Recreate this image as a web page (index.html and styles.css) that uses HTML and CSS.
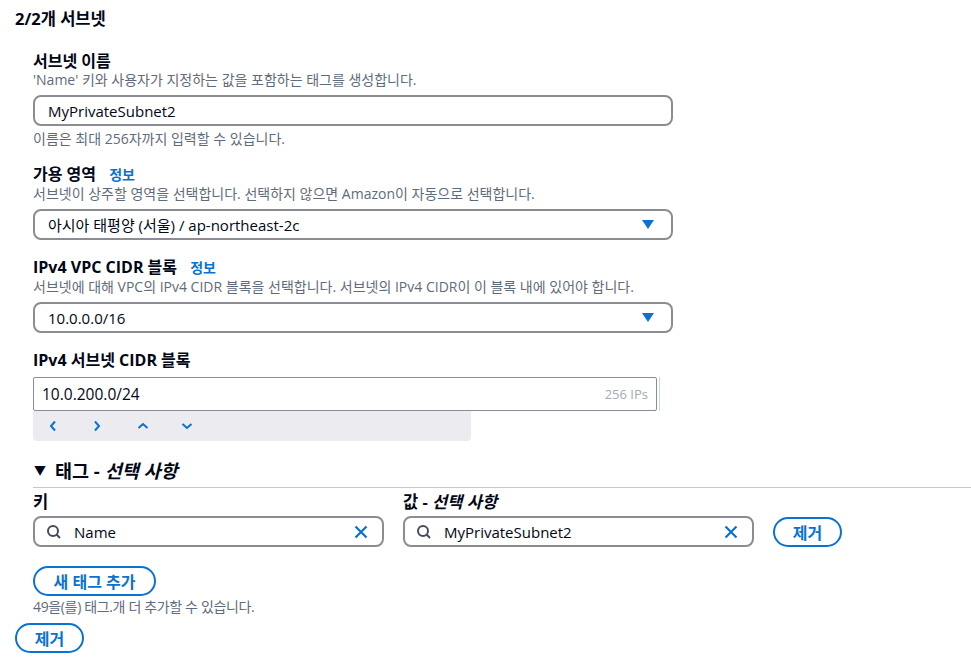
FILE: index.html
```html
<!DOCTYPE html>
<html lang="ko">
<head>
    <meta charset="UTF-8">
    <meta name="viewport" content="width=device-width, initial-scale=1.0">
    <title>서브넷 생성</title>
    <link rel="stylesheet" href="styles.css">
</head>
<body>

    <div class="subnet">
        <h2 class="subnet-title">2/2개 서브넷</h2>

        <div class="subnet-body">
            <div class="field field-first">
                <div class="label">서브넷 이름</div>
                <div class="desc">'Name' 키와 사용자가 지정하는 값을 포함하는 태그를 생성합니다.</div>
                <div class="input">MyPrivateSubnet2</div>
                <div class="hint">이름은 최대 256자까지 입력할 수 있습니다.</div>
            </div>

            <div class="field">
                <div class="label">가용 영역 <a class="info" href="#">정보</a></div>
                <div class="desc">서브넷이 상주할 영역을 선택합니다. 선택하지 않으면 Amazon이 자동으로 선택합니다.</div>
                <div class="input select">
                    <span>아시아 태평양 (서울) / ap-northeast-2c</span>
                    <svg class="caret" width="12" height="9" viewBox="0 0 12 9"><path d="M0 0h12L6 9z" fill="#0972d3"/></svg>
                </div>
            </div>

            <div class="field">
                <div class="label">IPv4 VPC CIDR 블록 <a class="info" href="#">정보</a></div>
                <div class="desc">서브넷에 대해 VPC의 IPv4 CIDR 블록을 선택합니다. 서브넷의 IPv4 CIDR이 이 블록 내에 있어야 합니다.</div>
                <div class="input select">
                    <span>10.0.0.0/16</span>
                    <svg class="caret" width="12" height="9" viewBox="0 0 12 9"><path d="M0 0h12L6 9z" fill="#0972d3"/></svg>
                </div>
            </div>

            <div class="field">
                <div class="label">IPv4 서브넷 CIDR 블록</div>
                <div class="cidr-row">
                    <div class="cidr-input">
                        <span>10.0.200.0/24</span>
                        <span class="ips">256 IPs</span>
                    </div>
                    <div class="cidr-edge"></div>
                </div>
                <div class="cidr-tools">
                    <svg width="8" height="12" viewBox="0 0 8 12"><path d="M6 1.5L2 6l4 4.5" fill="none" stroke="#0972d3" stroke-width="2"/></svg>
                    <svg width="8" height="12" viewBox="0 0 8 12"><path d="M2 1.5L6 6l-4 4.5" fill="none" stroke="#0972d3" stroke-width="2"/></svg>
                    <svg width="12" height="8" viewBox="0 0 12 8"><path d="M1.5 6L6 2l4.5 4" fill="none" stroke="#0972d3" stroke-width="2"/></svg>
                    <svg width="12" height="8" viewBox="0 0 12 8"><path d="M1.5 2L6 6l4.5-4" fill="none" stroke="#0972d3" stroke-width="2"/></svg>
                </div>
            </div>

            <div class="tags">
                <div class="tags-head">
                    <span class="tri">&#9660;</span>
                    <span>태그 - <i>선택 사항</i></span>
                </div>
                <div class="tags-line"></div>

                <div class="tag-grid">
                    <div class="tag-label">키</div>
                    <div class="tag-label">값 - <i>선택 사항</i></div>
                    <div></div>

                    <div class="input tag-input">
                        <svg class="search" width="16" height="16" viewBox="0 0 16 16"><circle cx="7" cy="7" r="5" fill="none" stroke="#414d5c" stroke-width="2"/><path d="M10.5 10.5L14 14" stroke="#414d5c" stroke-width="2"/></svg>
                        <span>Name</span>
                        <svg class="clear" width="14" height="14" viewBox="0 0 14 14"><path d="M1.5 1.5l11 11M12.5 1.5l-11 11" stroke="#0972d3" stroke-width="2.2"/></svg>
                    </div>
                    <div class="input tag-input">
                        <svg class="search" width="16" height="16" viewBox="0 0 16 16"><circle cx="7" cy="7" r="5" fill="none" stroke="#414d5c" stroke-width="2"/><path d="M10.5 10.5L14 14" stroke="#414d5c" stroke-width="2"/></svg>
                        <span>MyPrivateSubnet2</span>
                        <svg class="clear" width="14" height="14" viewBox="0 0 14 14"><path d="M1.5 1.5l11 11M12.5 1.5l-11 11" stroke="#0972d3" stroke-width="2.2"/></svg>
                    </div>
                    <button class="btn btn-row">제거</button>
                </div>

                <button class="btn btn-add">새 태그 추가</button>
                <div class="hint hint-tags">49을(를) 태그.개 더 추가할 수 있습니다.</div>
            </div>
        </div>

        <button class="btn btn-remove">제거</button>
    </div>

</body>
</html>
```

FILE: styles.css
```css
body {
    margin: 0;
    font-family: "Open Sans", "Noto Sans CJK KR", sans-serif;
    color: #000716;
    background: #fff;
}
.subnet {
    padding: 9px 0 0 15px;
}
.subnet-title {
    margin: 0;
    font-size: 16.5px;
    line-height: 20px;
    font-weight: 700;
}
.subnet-body {
    padding-left: 18px;
}
.field {
    margin-top: 17px;
    width: 640px;
}
.field-first {
    margin-top: 22px;
}
.label {
    font-size: 16px;
    line-height: 20px;
    font-weight: 700;
}
.info {
    margin-left: 9px;
    font-size: 14px;
    color: #0972d3;
    text-decoration: none;
}
.desc {
    margin-top: 1px;
    font-size: 14px;
    line-height: 16px;
    color: #5f6b7a;
}
.input {
    margin-top: 7px;
    height: 31px;
    box-sizing: border-box;
    border: 2px solid #8c8c94;
    border-radius: 8px;
    padding: 0 13px;
    display: flex;
    align-items: center;
    font-size: 15px;
}
.select {
    justify-content: space-between;
    padding-right: 17px;
}
.hint {
    margin-top: 5px;
    font-size: 14px;
    line-height: 16px;
    color: #5f6b7a;
}
.cidr-row {
    margin-top: 7px;
    display: flex;
}
.cidr-input {
    width: 624px;
    height: 34px;
    box-sizing: border-box;
    border: 1px solid #8c8c94;
    border-radius: 2px;
    padding: 0 8px;
    display: flex;
    align-items: center;
    justify-content: space-between;
    font-size: 15.5px;
}
.ips {
    font-size: 13px;
    color: #a4abb3;
}
.cidr-edge {
    margin-left: 2px;
    width: 1px;
    background: #c6d6ea;
}
.cidr-tools {
    width: 438px;
    height: 30px;
    background: #ebebf0;
    border-radius: 0 0 4px 4px;
    display: flex;
    align-items: center;
    padding-left: 16px;
    box-sizing: border-box;
}
.cidr-tools svg {
    margin-right: 36px;
}
.cidr-tools svg:nth-child(n+3) {
    margin-right: 32px;
}
.tags {
    margin-top: 20px;
}
.tags-head {
    font-size: 18.5px;
    line-height: 20px;
    font-weight: 700;
    display: flex;
    align-items: center;
}
.tri {
    font-size: 12px;
    margin-right: 9px;
    margin-left: 1px;
}
.tags-line {
    margin-top: 6px;
    height: 1px;
    background: #c6c6cd;
}
.tag-grid {
    margin-top: 4px;
    display: grid;
    grid-template-columns: 351px 351px 69px;
    column-gap: 19px;
    align-items: center;
}
.tag-label {
    font-size: 16.5px;
    line-height: 20px;
    font-weight: 700;
}
.tag-input {
    margin-top: 4px;
    padding: 0 14px 0 11px;
}
.search {
    margin-right: 12px;
}
.clear {
    margin-left: auto;
}
.btn {
    height: 30px;
    box-sizing: border-box;
    border: 2px solid #0972d3;
    border-radius: 20px;
    background: #fff;
    color: #0972d3;
    font-family: "Open Sans", "Noto Sans CJK KR", sans-serif;
    font-size: 16px;
    font-weight: 700;
    padding: 0;
    white-space: nowrap;
    cursor: pointer;
}
.btn-row {
    margin-top: 4px;
    width: 69px;
}
.btn-add {
    margin-top: 19px;
    width: 123px;
}
.hint-tags {
    margin-top: 3px;
    letter-spacing: -0.35px;
}
.btn-remove {
    margin-top: 8px;
    width: 69px;
}
```
